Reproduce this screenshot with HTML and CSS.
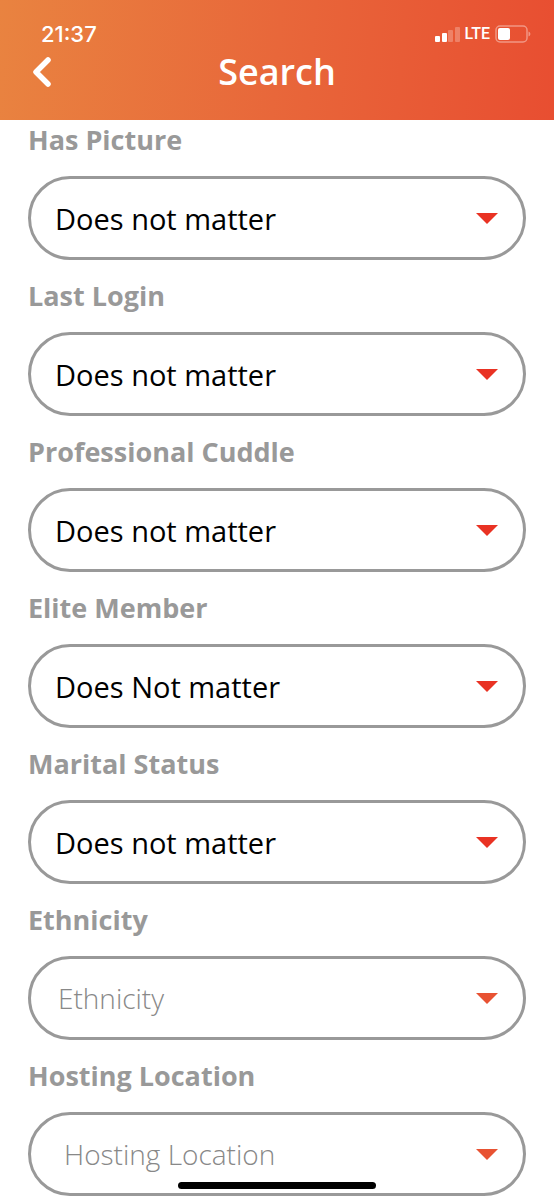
FILE: index.html
```html
<!DOCTYPE html>
<html lang="en">
<head>
<meta charset="utf-8">
<meta name="viewport" content="width=device-width, initial-scale=1">
<title>Search</title>
<link rel="stylesheet" href="styles.css">
</head>
<body>
<header class="top">
  <div class="status">
    <time class="clock">21:37</time>
    <div class="indicators">
      <svg class="signal" viewBox="0 0 25 16" aria-hidden="true">
        <rect x="0" y="10" width="5" height="6" rx="1"/>
        <rect x="7" y="7" width="5" height="9" rx="1"/>
        <rect class="dim" x="13" y="4" width="5" height="12" rx="1"/>
        <rect class="dim" x="20" y="1" width="5" height="15" rx="1"/>
      </svg>
      <span class="network">LTE</span>
      <svg class="battery" viewBox="0 0 36 18" aria-hidden="true">
        <rect class="shell" x="1" y="1" width="31" height="16" rx="4"/>
        <rect x="3" y="3" width="12" height="12" rx="2"/>
        <path class="cap" d="M33.500 6.500c2.500.8 2.500 4.200 0 5z"/>
      </svg>
    </div>
  </div>
  <div class="bar">
    <button class="back" type="button" aria-label="Back">
      <svg viewBox="0 0 20 32" aria-hidden="true"><path d="M16 4 4 16 16 28"/></svg>
    </button>
    <h1 class="title">Search</h1>
  </div>
</header>

<main>
  <form class="filters">
    <div class="field">
      <label for="picture">Has Picture</label>
      <div class="control">
        <select id="picture"><option>Does not matter</option></select>
        <svg class="arrow" viewBox="0 0 22 11" aria-hidden="true"><path d="M0 0h22L11 11z"/></svg>
      </div>
    </div>
    <div class="field">
      <label for="login">Last Login</label>
      <div class="control">
        <select id="login"><option>Does not matter</option></select>
        <svg class="arrow" viewBox="0 0 22 11" aria-hidden="true"><path d="M0 0h22L11 11z"/></svg>
      </div>
    </div>
    <div class="field">
      <label for="professional">Professional Cuddle</label>
      <div class="control">
        <select id="professional"><option>Does not matter</option></select>
        <svg class="arrow" viewBox="0 0 22 11" aria-hidden="true"><path d="M0 0h22L11 11z"/></svg>
      </div>
    </div>
    <div class="field">
      <label for="elite">Elite Member</label>
      <div class="control">
        <select id="elite"><option>Does Not matter</option></select>
        <svg class="arrow" viewBox="0 0 22 11" aria-hidden="true"><path d="M0 0h22L11 11z"/></svg>
      </div>
    </div>
    <div class="field">
      <label for="marital">Marital Status</label>
      <div class="control">
        <select id="marital"><option>Does not matter</option></select>
        <svg class="arrow" viewBox="0 0 22 11" aria-hidden="true"><path d="M0 0h22L11 11z"/></svg>
      </div>
    </div>
    <div class="field">
      <label for="ethnicity">Ethnicity</label>
      <div class="control empty">
        <select id="ethnicity"><option value="">Ethnicity</option></select>
        <svg class="arrow" viewBox="0 0 22 11" aria-hidden="true"><path d="M0 0h22L11 11z"/></svg>
      </div>
    </div>
    <div class="field">
      <label for="hosting">Hosting Location</label>
      <div class="control empty inset">
        <select id="hosting"><option value="">Hosting Location</option></select>
        <svg class="arrow" viewBox="0 0 22 11" aria-hidden="true"><path d="M0 0h22L11 11z"/></svg>
      </div>
    </div>
  </form>
</main>
<div class="home-indicator"></div>
</body>
</html>
```

FILE: styles.css
```css
* {
  box-sizing: border-box;
}

body {
  margin: 0;
  background: #fff;
  font-family: "Open Sans", "Noto Sans", sans-serif;
}

.top {
  padding-top: 20px;
  color: #fff;
  background: linear-gradient(95deg, #e98340, #e8673a 50%, #e84e31);
}

.status {
  display: flex;
  align-items: center;
  justify-content: space-between;
  height: 28px;
  padding: 0 23px 0 41px;
}

.clock {
  font: 500 22px/28px Inter, sans-serif;
}

.indicators {
  display: flex;
  align-items: center;
  gap: 5px;
  fill: #fff;
}

.signal {
  width: 25px;
  height: 16px;
}

.dim {
  opacity: 0.25;
}

.network {
  font: 500 16px/28px Roboto, sans-serif;
}

.battery {
  width: 36px;
  height: 18px;
}

.shell {
  fill: none;
  stroke: #fff;
  stroke-width: 1.5;
  stroke-opacity: 0.4;
}

.cap {
  opacity: 0.4;
}

.bar {
  display: grid;
  grid-template-columns: 40px 1fr 40px;
  align-items: center;
  height: 72px;
  padding: 0 28px 24px;
}

.back {
  display: flex;
  padding: 0 4px;
  border: 0;
  background: none;
}

.back svg {
  width: 20px;
  height: 32px;
  fill: none;
  stroke: #fff;
  stroke-width: 5.5;
  stroke-linecap: round;
  stroke-linejoin: round;
}

.title {
  margin: 0;
  font-size: 36px;
  font-weight: 600;
  line-height: 48px;
  text-align: center;
}

.filters {
  display: flex;
  flex-direction: column;
  gap: 16px;
  padding: 0 28px 4px;
}

.field {
  display: flex;
  flex-direction: column;
  gap: 16px;
}

.field label {
  color: #999;
  font-size: 27px;
  font-weight: 700;
  line-height: 40px;
}

.control {
  display: grid;
  align-items: center;
}

.control select,
.arrow {
  grid-area: 1 / 1;
}

.control select {
  appearance: none;
  width: 100%;
  height: 84px;
  padding: 0 64px 0 24px;
  border: 3px solid #999;
  border-radius: 42px;
  background: #fff;
  color: #000;
  font-family: "Open Sans", "Noto Sans", sans-serif;
  font-size: 29px;
}

.control.empty select {
  padding-left: 27px;
  color: #888;
  font-size: 28px;
  font-weight: 300;
}

.control.inset select {
  padding-left: 33px;
}

.arrow {
  justify-self: end;
  width: 22px;
  height: 11px;
  margin-right: 28px;
  fill: #e93223;
  pointer-events: none;
}

.empty .arrow {
  fill: #e85232;
}

.home-indicator {
  position: fixed;
  bottom: 11px;
  left: 50%;
  width: 198px;
  height: 7px;
  border-radius: 4px;
  background: #000;
  transform: translateX(-50%);
}
```
